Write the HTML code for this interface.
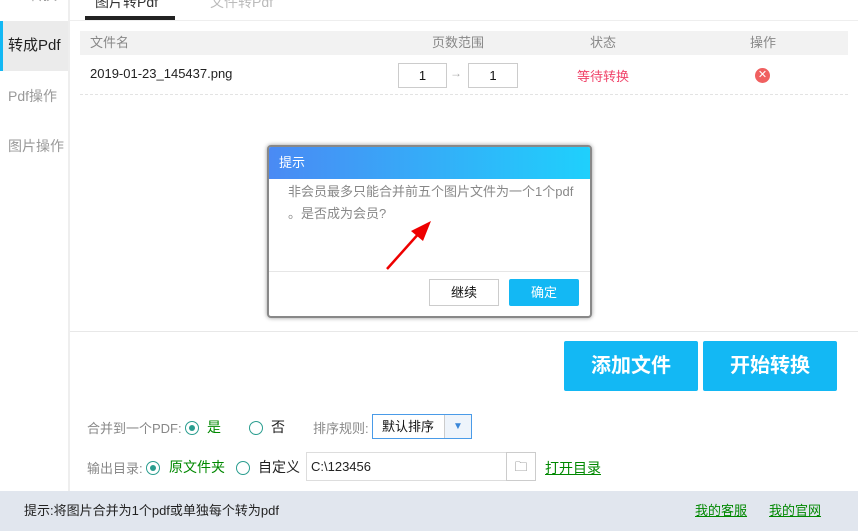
<!DOCTYPE html>
<html><head><meta charset="utf-8"><style>
*{margin:0;padding:0;box-sizing:border-box}
body{width:858px;height:531px;position:relative;overflow:hidden;background:#fff;font-family:"Liberation Sans","Noto Sans CJK SC",sans-serif;font-size:13px;color:#333}
.a{position:absolute}
.side{left:0;top:0;width:70px;height:491px;border-right:2px solid #eee;background:#fff}
.si{position:absolute;left:0;width:68px;height:50px;line-height:50px;padding-left:8px;color:#999;font-size:14px}
.rad{display:inline-block;width:14px;height:14px;border:1px solid #2a9d8f;border-radius:50%;position:absolute}
.rad.on:after{content:"";position:absolute;left:3px;top:3px;width:6px;height:6px;border-radius:50%;background:#2a9d8f}
.btn{background:#13b8f4;color:#fff;font-size:20px;font-weight:bold;text-align:center;border-radius:2px}
</style></head><body>
<div class="a side">
<div class="si" style="top:-30px">Pdf转换</div>
<div class="si" style="top:21px;background:#ebebeb;color:#222;border-left:3px solid #13b8f4;padding-left:5px;font-size:15px">转成Pdf</div>
<div class="si" style="top:71px">Pdf操作</div>
<div class="si" style="top:121px">图片操作</div>
</div>
<div class="a" style="left:70px;top:20px;width:788px;height:1px;background:#eee"></div>
<div class="a" style="left:95px;top:-8px;font-size:14px;color:#333">图片转Pdf</div>
<div class="a" style="left:85px;top:16px;width:90px;height:4px;background:#222"></div>
<div class="a" style="left:210px;top:-8px;font-size:14px;color:#bbb">文件转Pdf</div>
<div class="a" style="left:80px;top:31px;width:768px;height:24px;background:#f2f2f2;color:#888;line-height:24px">
<span class="a" style="left:10px">文件名</span><span class="a" style="left:352px">页数范围</span><span class="a" style="left:510px">状态</span><span class="a" style="left:670px">操作</span></div>
<div class="a" style="left:90px;top:66px;font-size:13px;color:#222">2019-01-23_145437.png</div>
<div class="a" style="left:398px;top:63px;width:49px;height:25px;border:1px solid #ccc;text-align:center;line-height:23px;color:#111">1</div>
<div class="a" style="left:450px;top:66px;color:#aaa;font-size:12px">→</div>
<div class="a" style="left:468px;top:63px;width:50px;height:25px;border:1px solid #ccc;text-align:center;line-height:23px;color:#111">1</div>
<div class="a" style="left:577px;top:66px;color:#f0446a">等待转换</div>
<div class="a" style="left:755px;top:68px;width:15px;height:15px;border-radius:50%;background:#f06060;color:#fff;font-size:11px;line-height:15px;text-align:center">✕</div>
<div class="a" style="left:80px;top:94px;width:768px;border-top:1px dashed #e3e3e3"></div>
<div class="a" style="left:70px;top:331px;width:788px;height:1px;background:#e8e8e8"></div>
<div class="a btn" style="left:564px;top:341px;width:134px;height:50px;line-height:50px">添加文件</div>
<div class="a btn" style="left:703px;top:341px;width:134px;height:50px;line-height:50px">开始转换</div>
<div class="a" style="left:87px;top:418px;color:#888">合并到一个PDF:</div>
<span class="rad on" style="left:185px;top:421px"></span><span class="a" style="left:207px;top:417px;color:#080;font-size:14px">是</span>
<span class="rad" style="left:249px;top:421px"></span><span class="a" style="left:271px;top:417px;color:#222;font-size:14px">否</span>
<div class="a" style="left:313px;top:418px;color:#888">排序规则:</div>
<div class="a" style="left:372px;top:414px;width:100px;height:25px;border:1px solid #4a9be8;line-height:23px;padding-left:9px;color:#111">默认排序<span class="a" style="left:71px;top:0;width:27px;height:23px;border-left:1px solid #ccc;background:#eef4fb;color:#3a86d8;font-size:10px;text-align:center">▼</span></div>
<div class="a" style="left:87px;top:458px;color:#888">输出目录:</div>
<span class="rad on" style="left:146px;top:461px"></span><span class="a" style="left:169px;top:457px;color:#080;font-size:14px">原文件夹</span>
<span class="rad" style="left:236px;top:461px"></span><span class="a" style="left:258px;top:457px;color:#222;font-size:14px">自定义</span>
<div class="a" style="left:306px;top:452px;width:230px;height:29px;border:1px solid #ddd;line-height:27px;padding-left:4px;color:#222">C:\123456<span class="a" style="left:199px;top:-1px;width:30px;height:29px;border:1px solid #ccc;text-align:center;font-size:13px;color:#555">🗀</span></div>
<div class="a" style="left:545px;top:458px;color:#080;text-decoration:underline;font-size:14px">打开目录</div>
<div class="a" style="left:0;top:491px;width:858px;height:40px;background:#e1e6ee;line-height:40px;padding-left:24px;color:#222">提示:将图片合并为1个pdf或单独每个转为pdf
<span class="a" style="left:695px;color:#080;text-decoration:underline">我的客服</span><span class="a" style="left:769px;color:#080;text-decoration:underline">我的官网</span></div>
<div class="a" style="left:267px;top:145px;width:325px;height:173px;border:2px solid #888;border-radius:4px;background:#fff;box-shadow:0 0 4px #999;overflow:hidden">
<div style="height:32px;background:linear-gradient(90deg,#4a8af4,#1fd0fc);color:#fff;line-height:32px;padding-left:10px;font-size:13px">提示</div>
<div style="padding:2px 0 0 19px;color:#888;line-height:22px;font-size:13px">非会员最多只能合并前五个图片文件为一个1个pdf<br>。是否成为会员?</div>
<div class="a" style="left:0;top:124px;width:325px;height:1px;background:#e6e6e6"></div>
<div class="a" style="left:160px;top:132px;width:70px;height:27px;border:1px solid #ccc;text-align:center;line-height:25px;color:#111">继续</div>
<div class="a" style="left:240px;top:132px;width:70px;height:27px;background:#13b8f4;text-align:center;line-height:27px;color:#fff;border-radius:2px">确定</div>
<svg class="a" style="left:110px;top:70px" width="60" height="60"><line x1="8" y1="52" x2="42" y2="14" stroke="#e00" stroke-width="2.5"/><polygon points="52,4 44,24 32,14" fill="#e00"/></svg>
</div>
</body></html>
